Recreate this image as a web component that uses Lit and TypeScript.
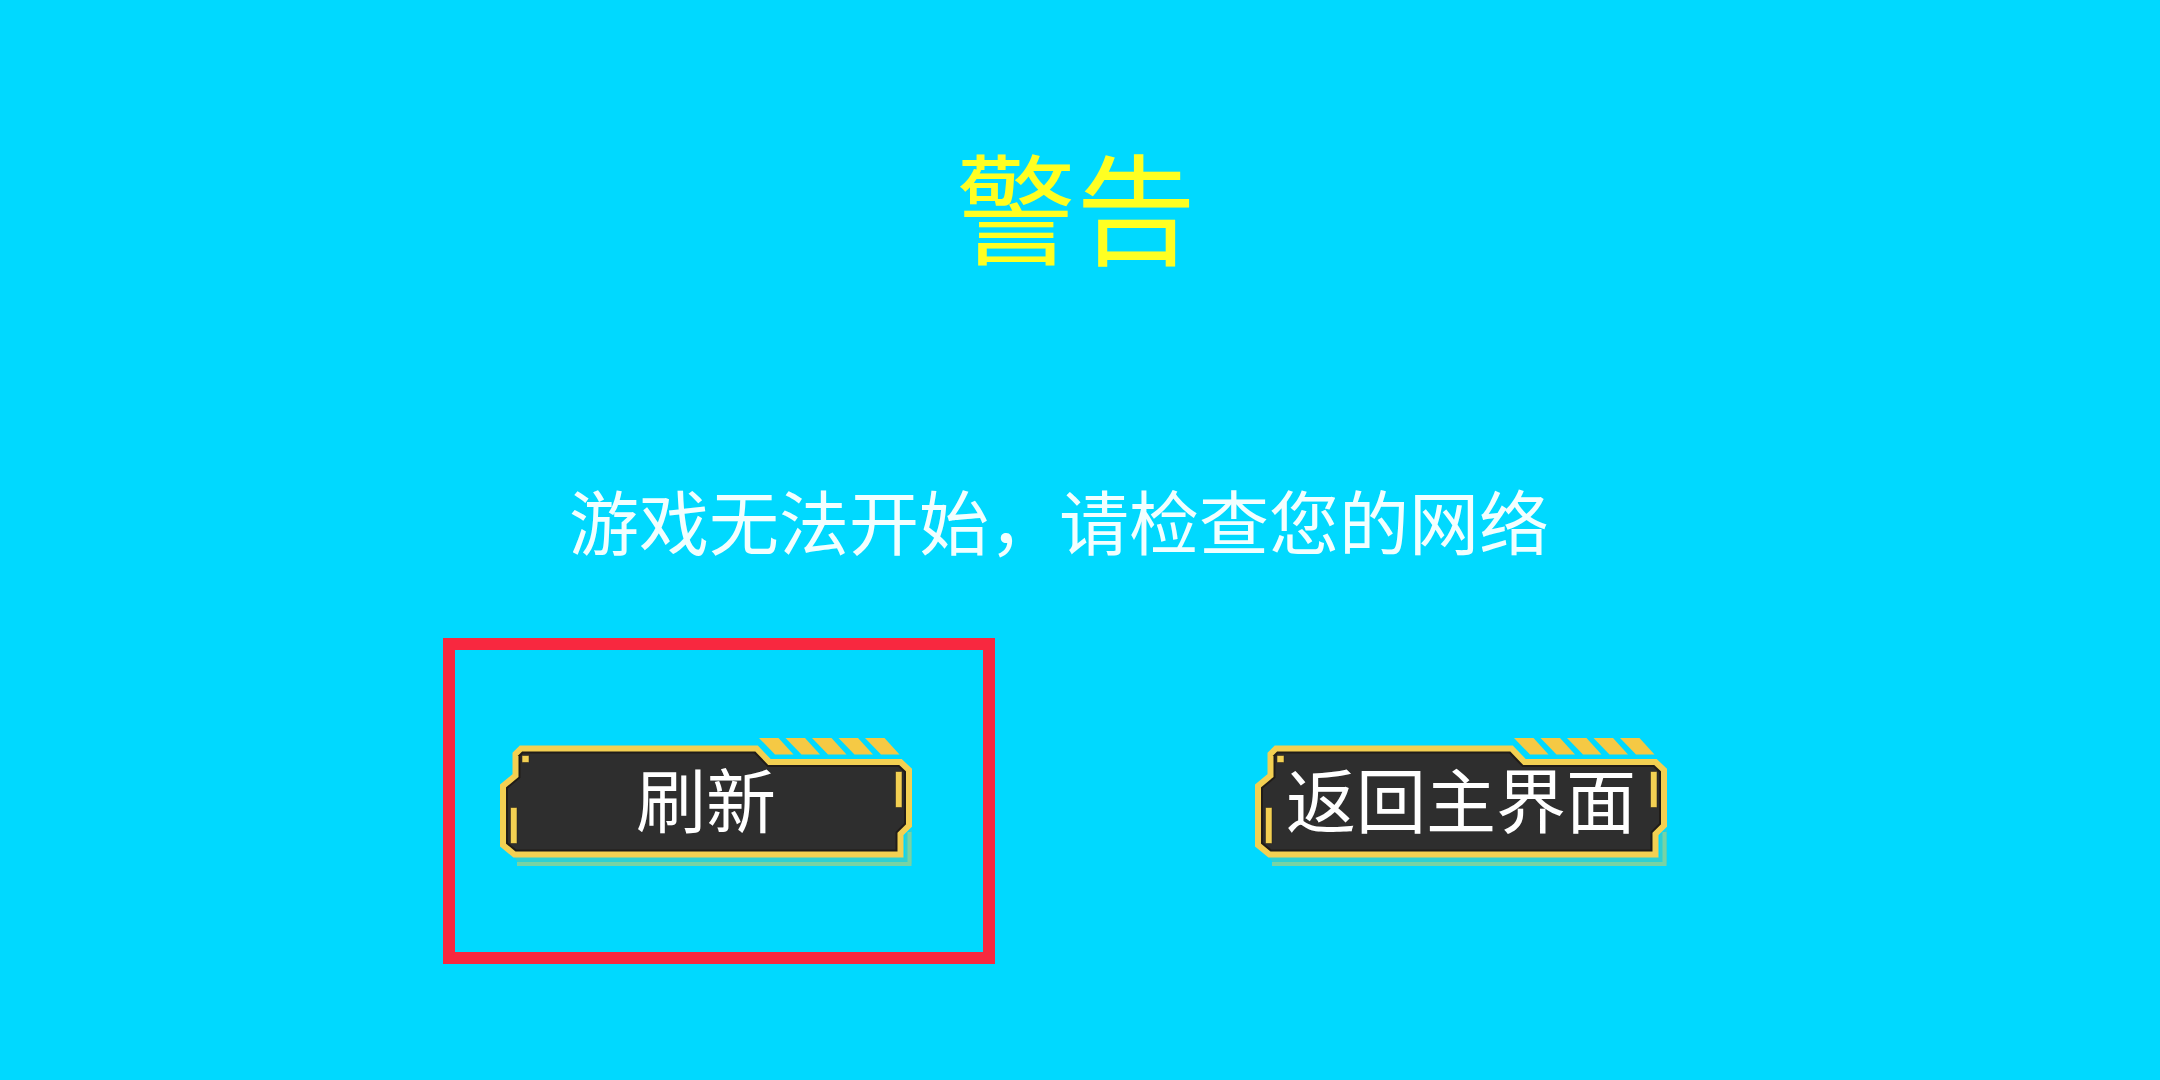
import { LitElement, html, css, svg } from "lit";
import { customElement, property } from "lit/decorators.js";

const OUTLINE =
  "M21 10.5H256.5L269.5 24H400.5L409 32V87.5L400.5 96V116.5H14.5L3 107V48L15.5 37.5V16Z";
const STRIPES = [259, 285.5, 312, 338.5, 365];

@customElement("panel-button")
export class PanelButton extends LitElement {
  @property() label = "";

  static styles = css`
    :host {
      display: block;
    }
    .button {
      display: grid;
      justify-items: center;
      width: 412px;
      height: 128px;
      margin: 0;
      padding: 0;
      border: 0;
      background: none;
      color: #ffffff;
      font: 400 70px/72px "Noto Sans CJK SC", sans-serif;
      white-space: nowrap;
      cursor: pointer;
    }
    .plate,
    .label {
      grid-area: 1 / 1;
    }
    .plate {
      display: block;
      width: 100%;
      height: 100%;
    }
    .label {
      z-index: 1;
      padding-top: 24px;
    }
  `;

  render() {
    return html`
      <button class="button" type="button">
        <svg class="plate" viewBox="0 0 412 128" aria-hidden="true">
          <defs>
            <clipPath id="face"><path d=${OUTLINE} /></clipPath>
          </defs>
          <path d="M14 119H405V97L412 91V126H19Z" fill="#2fd0d2" />
          <path d="M17 126H409.5V94" fill="none" stroke="#78d3a4" stroke-width="4" />
          <path d=${OUTLINE} fill="#2e2e2e" />
          <path d=${OUTLINE} fill="none" stroke="#201c18" stroke-width="10" clip-path="url(#face)" />
          <path d=${OUTLINE} fill="none" stroke="#f3d052" stroke-width="6" />
          <g fill="#f3d052" stroke="#201c18" stroke-opacity="0.5" stroke-width="1">
            <rect x="22" y="17.5" width="7" height="7" />
            <rect x="10.5" y="69.5" width="6.500" height="36" />
            <rect x="395.5" y="33.5" width="6.500" height="36" />
          </g>
          ${STRIPES.map(
            (x) => svg`<path d="M${x} 0h19.500l15 16.500h-18.500z" fill="#f5c944" />`
          )}
        </svg>
        <span class="label">${this.label}</span>
      </button>
    `;
  }
}

@customElement("app-root")
export class AppRoot extends LitElement {
  static styles = css`
    :host {
      display: block;
    }
    .screen {
      display: flex;
      flex-direction: column;
      align-items: center;
      box-sizing: border-box;
      min-height: 100vh;
      padding-top: 144px;
      background: #00d9ff;
      font-family: "Noto Sans CJK SC", sans-serif;
    }
    .title {
      margin: 0 8px 220px 0;
      color: #ffff22;
      font-size: 120px;
      font-weight: 400;
      line-height: 120px;
    }
    .message {
      margin: 0 42px 182px 0;
      color: #f2ffff;
      font-size: 70px;
      font-weight: 400;
      line-height: 72px;
    }
    .actions {
      display: flex;
      gap: 343px;
      padding-left: 7px;
    }
    .marked {
      position: relative;
    }
    .marker {
      position: absolute;
      inset: -100px -83px -98px -57px;
      border: 12px solid #f8283f;
      pointer-events: none;
    }
  `;

  render() {
    return html`
      <main class="screen">
        <h1 class="title">警告</h1>
        <p class="message">游戏无法开始，请检查您的网络</p>
        <div class="actions">
          <div class="marked">
            <panel-button label="刷新"></panel-button>
            <div class="marker"></div>
          </div>
          <panel-button label="返回主界面"></panel-button>
        </div>
      </main>
    `;
  }
}
